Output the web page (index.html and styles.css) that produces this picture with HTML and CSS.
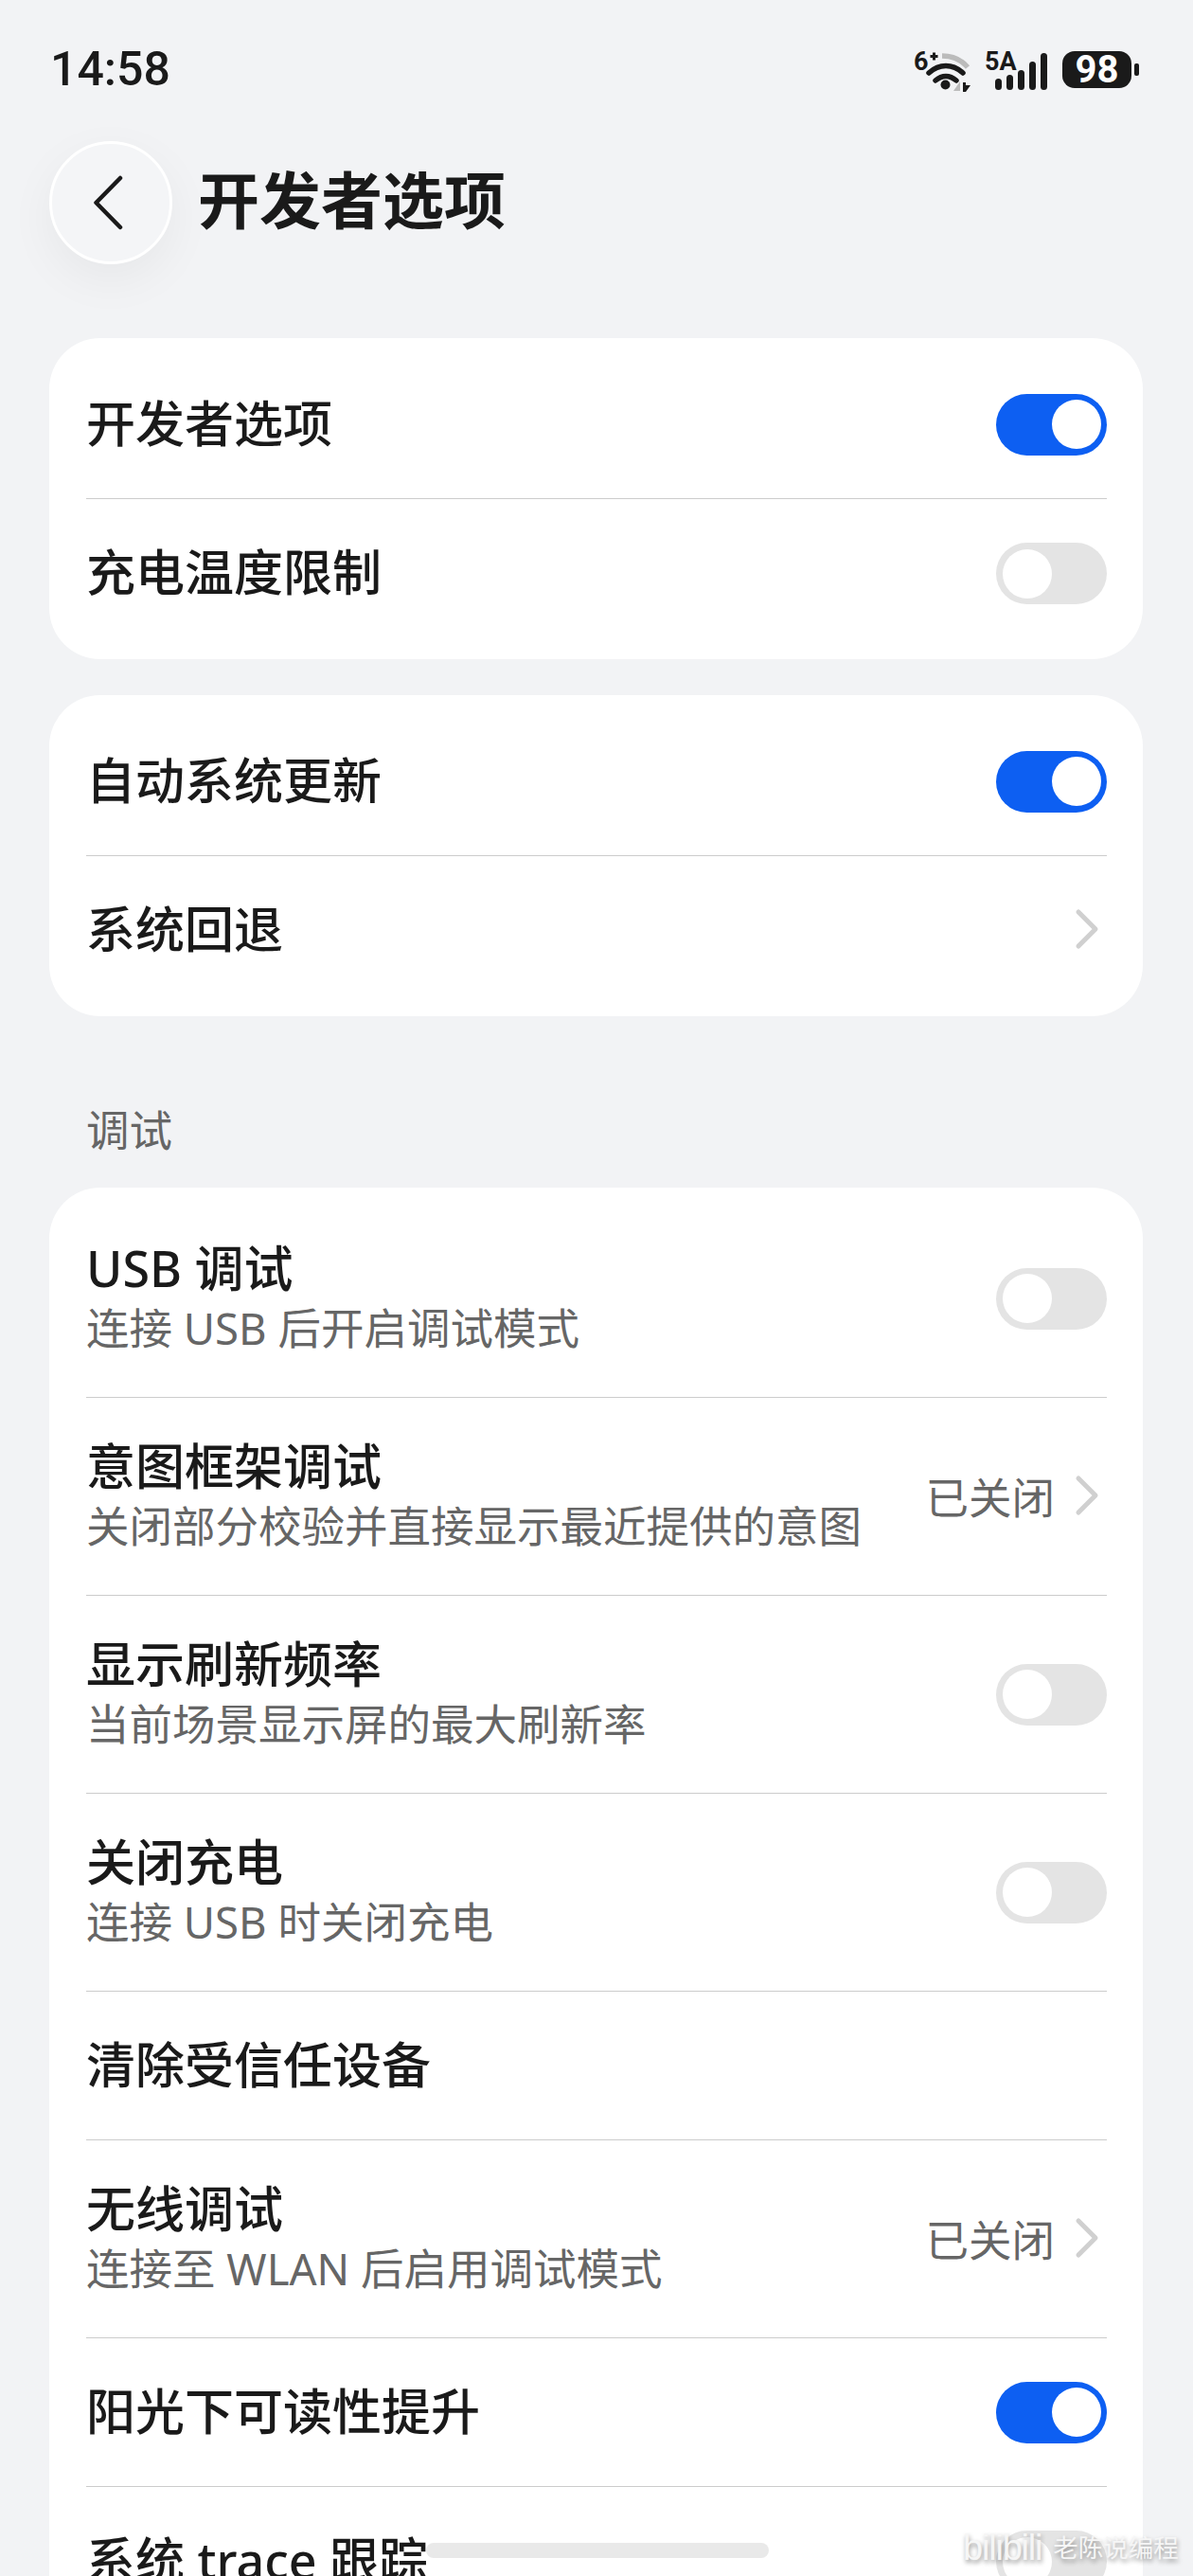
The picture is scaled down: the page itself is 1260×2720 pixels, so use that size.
FILE: index.html
```html
<!DOCTYPE html>
<html lang="zh-CN">
<head>
    <meta charset="UTF-8">
    <meta name="viewport" content="width=device-width, initial-scale=1.0">
    <title>开发者选项</title>
    <link rel="stylesheet" href="styles.css">
</head>
<body>
    <div class="status-bar">
        <span class="time">14:58</span>
        <div class="status-icons">
            <svg class="icon-wifi" width="65" height="55" viewBox="965 45 65 55">
                <text x="965" y="73" class="net-label">6</text>
                <path d="M982.500 58.500h8M986.500 54.500v8" class="plus"/>
                <path d="M995 58c12 0 21 5 27 12" class="arc arc-grey"/>
                <path d="M981 76c11-10 25-10 36 0" class="arc"/>
                <path d="M988 84c7-6 15-6 22 0" class="arc"/>
                <circle cx="998.500" cy="88.500" r="5"/>
                <polygon points="1014,85 1014,95 1007,95" class="arrow-grey"/>
                <polygon points="1017,86 1020,86 1020,89 1025,89 1020,96 1017,96"/>
            </svg>
            <svg class="icon-signal" width="68" height="55" viewBox="1040 45 68 55">
                <text x="1040" y="73" class="net-label">5A</text>
                <rect x="1051" y="82" width="7" height="12" rx="3.500"/>
                <rect x="1063" y="78" width="7" height="16" rx="3.500"/>
                <rect x="1075" y="73" width="7" height="21" rx="3.500"/>
                <rect x="1087" y="64" width="7" height="30" rx="3.500"/>
                <rect x="1099" y="55" width="7" height="39" rx="3.500"/>
            </svg>
            <div class="battery">
                <span class="battery-body">98</span>
                <span class="battery-tip"></span>
            </div>
        </div>
    </div>

    <header class="title-bar">
        <button class="back-btn">
            <svg width="32" height="58" viewBox="0 0 32 58"><path d="M29 3 3.500 29 29 55"/></svg>
        </button>
        <h1>开发者选项</h1>
    </header>

    <section class="card">
        <div class="row">
            <span class="row-title">开发者选项</span>
            <span class="toggle on"></span>
        </div>
        <div class="row">
            <span class="row-title">充电温度限制</span>
            <span class="toggle"></span>
        </div>
    </section>

    <section class="card">
        <div class="row">
            <span class="row-title">自动系统更新</span>
            <span class="toggle on"></span>
        </div>
        <div class="row">
            <span class="row-title">系统回退</span>
            <svg class="chevron" width="28" height="44" viewBox="0 0 28 44"><path d="M5 4 23 22 5 40"/></svg>
        </div>
    </section>

    <h2 class="section-label">调试</h2>

    <section class="card">
        <div class="row tall">
            <div class="row-text">
                <span class="row-title">USB 调试</span>
                <span class="row-sub">连接 USB 后开启调试模式</span>
            </div>
            <span class="toggle"></span>
        </div>
        <div class="row tall">
            <div class="row-text">
                <span class="row-title">意图框架调试</span>
                <span class="row-sub">关闭部分校验并直接显示最近提供的意图</span>
            </div>
            <div class="row-value">
                <span>已关闭</span>
                <svg class="chevron" width="28" height="44" viewBox="0 0 28 44"><path d="M5 4 23 22 5 40"/></svg>
            </div>
        </div>
        <div class="row tall">
            <div class="row-text">
                <span class="row-title">显示刷新频率</span>
                <span class="row-sub">当前场景显示屏的最大刷新率</span>
            </div>
            <span class="toggle"></span>
        </div>
        <div class="row tall">
            <div class="row-text">
                <span class="row-title">关闭充电</span>
                <span class="row-sub">连接 USB 时关闭充电</span>
            </div>
            <span class="toggle"></span>
        </div>
        <div class="row">
            <span class="row-title">清除受信任设备</span>
        </div>
        <div class="row tall">
            <div class="row-text">
                <span class="row-title">无线调试</span>
                <span class="row-sub">连接至 WLAN 后启用调试模式</span>
            </div>
            <div class="row-value">
                <span>已关闭</span>
                <svg class="chevron" width="28" height="44" viewBox="0 0 28 44"><path d="M5 4 23 22 5 40"/></svg>
            </div>
        </div>
        <div class="row">
            <span class="row-title">阳光下可读性提升</span>
            <span class="toggle on"></span>
        </div>
        <div class="row">
            <span class="row-title">系统 trace 跟踪</span>
            <span class="toggle"></span>
        </div>
    </section>

    <div class="home-bar"></div>
    <div class="watermark">
        <span class="wm-logo">bilibili</span>
        <span class="wm-name">老陈说编程</span>
    </div>
</body>
</html>
```

FILE: styles.css
```css
* {
    margin: 0;
    padding: 0;
    box-sizing: border-box;
}
html, body {
    height: 2720px;
    overflow: hidden;
}
body {
    position: relative;
    font-family: "Noto Sans", "Noto Sans CJK SC", sans-serif;
    background-color: #f2f3f5;
    color: #1a1a1a;
}

/* status bar */
.status-bar {
    height: 146px;
    padding: 0 57px 0 53px;
    display: flex;
    align-items: center;
    justify-content: space-between;
}
.time {
    font-family: Roboto, sans-serif;
    font-size: 50px;
    font-weight: 500;
}
.status-icons {
    display: flex;
    align-items: center;
    gap: 14px;
}
.status-icons svg {
    fill: #1a1a1a;
}
.icon-signal {
    margin-left: -4px;
}
.net-label {
    font-family: Roboto, sans-serif;
    font-size: 27px;
    font-weight: 700;
}
.plus {
    fill: none;
    stroke: #1a1a1a;
    stroke-width: 3;
}
.arc {
    fill: none;
    stroke: #1a1a1a;
    stroke-width: 5.500;
    stroke-linecap: round;
}
.arc-grey {
    stroke: #bbbbbb;
    stroke-linecap: butt;
}
.arrow-grey {
    fill: #bbbbbb;
}
.battery {
    display: flex;
    align-items: center;
    gap: 3px;
}
.battery-body {
    width: 73px;
    height: 39px;
    border-radius: 13px;
    background-color: #1a1a1a;
    color: white;
    font-family: Roboto, sans-serif;
    font-size: 40px;
    font-weight: 700;
    line-height: 39px;
    text-align: center;
}
.battery-tip {
    width: 5px;
    height: 13px;
    border-radius: 2px;
    background-color: #1a1a1a;
}

/* title */
.title-bar {
    margin-top: 3px;
    padding-left: 52px;
    height: 208px;
    display: flex;
    align-items: flex-start;
    gap: 27px;
}
.back-btn {
    width: 130px;
    height: 130px;
    flex: none;
    border: 3px solid white;
    border-radius: 50%;
    background-color: #f4f5f7;
    box-shadow: 0 16px 50px rgba(0, 0, 0, 0.05);
    display: flex;
    align-items: center;
    justify-content: center;
}
.back-btn svg {
    margin-right: 7px;
}
.back-btn path {
    fill: none;
    stroke: #1a1a1a;
    stroke-width: 4.500;
    stroke-linecap: round;
    stroke-linejoin: round;
}
h1 {
    font-size: 65px;
    font-weight: 700;
    line-height: 124px;
}

/* cards */
.card {
    margin: 0 53px 38px 52px;
    padding: 13px 38px 12px 39px;
    border-radius: 54px;
    background-color: white;
}
.row {
    height: 157px;
    border-bottom: 1px solid #cccccc;
    display: flex;
    align-items: center;
    justify-content: space-between;
}
.row:last-child {
    border-bottom: none;
}
.row.tall {
    height: 209px;
}
.row-text {
    display: flex;
    flex-direction: column;
}
.row-title {
    font-size: 52px;
    font-weight: 500;
    line-height: 62px;
}
.row > .row-title {
    margin-bottom: 3px;
}
.row-sub {
    font-size: 45.500px;
    line-height: 64px;
    color: #666;
}
.row-value {
    display: flex;
    align-items: center;
    gap: 20px;
    margin-bottom: 3px;
    font-size: 45.500px;
    color: #666;
}
.chevron {
    flex: none;
    margin-right: 7px;
}
.row > .chevron {
    margin-bottom: 3px;
}
.chevron path {
    fill: none;
    stroke: #d0d0d0;
    stroke-width: 5;
    stroke-linecap: round;
    stroke-linejoin: round;
}
.section-label {
    padding: 84px 0 24px 91px;
    margin-top: -38px;
    height: 181px;
    font-size: 45.500px;
    font-weight: 400;
    line-height: 73px;
    color: #666;
}

/* toggle */
.toggle {
    position: relative;
    width: 117px;
    height: 65px;
    flex: none;
    border-radius: 33px;
    background-color: #e4e4e4;
}
.toggle::after {
    content: "";
    position: absolute;
    top: 6.500px;
    left: 6.500px;
    width: 52px;
    height: 52px;
    border-radius: 50%;
    background-color: white;
}
.toggle.on {
    background-color: #0d5ff2;
}
.toggle.on::after {
    left: 58.500px;
}

/* overlays */
.home-bar {
    position: absolute;
    top: 2685px;
    left: 450px;
    width: 362px;
    height: 16px;
    border-radius: 8px;
    background-color: #e9e9e9;
}
.watermark {
    position: absolute;
    top: 2665px;
    left: 1017px;
    display: flex;
    align-items: center;
    gap: 12px;
    line-height: 50px;
    color: #f6f6f6;
    text-shadow: 1px 3px 5px rgba(0, 0, 0, 0.4);
}
.wm-logo {
    font-family: "Liberation Sans", sans-serif;
    font-size: 38px;
    letter-spacing: -1.200px;
}
.wm-name {
    font-size: 26.500px;
}
```
